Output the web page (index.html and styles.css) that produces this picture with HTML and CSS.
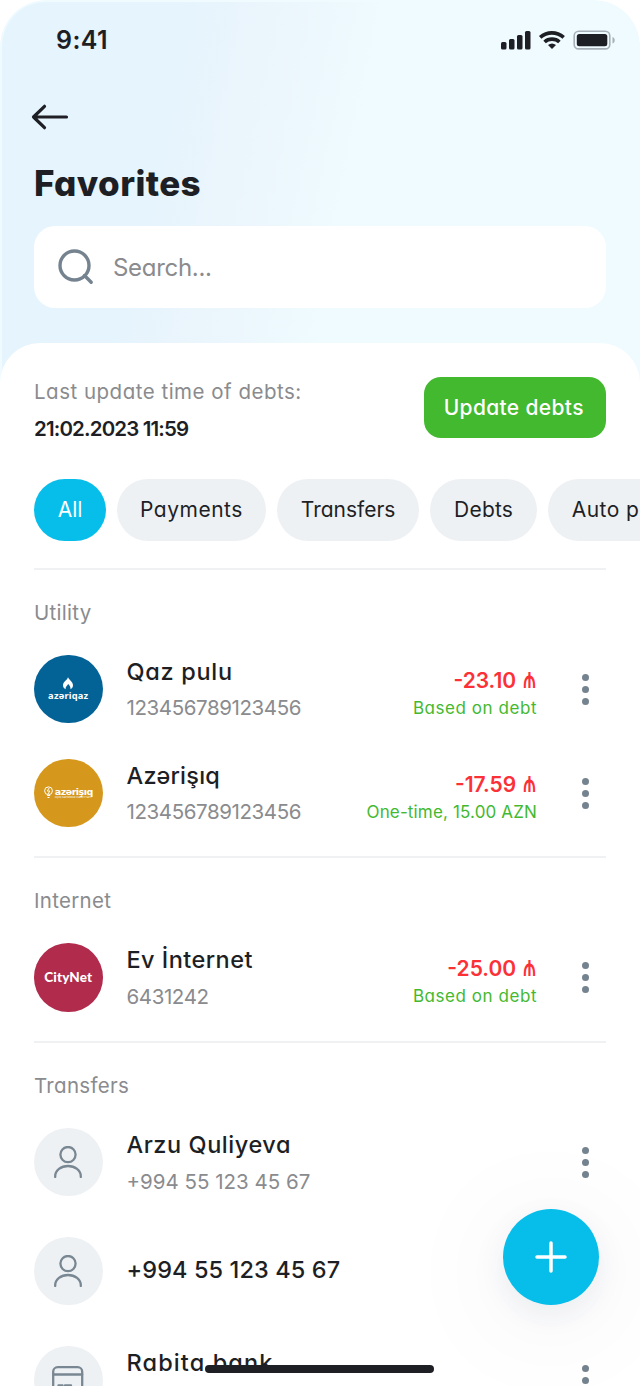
FILE: index.html
```html
<!DOCTYPE html>
<html lang="en">
<head>
<meta charset="utf-8">
<title>Favorites</title>
<link rel="stylesheet" href="styles.css">
</head>
<body>
<svg class="defs" width="0" height="0">
  <symbol id="user" viewBox="0 0 28 32"><circle cx="14" cy="8.6" r="7.6"/><path d="M1.2 31v-.8C1.2 24.500 7 20 14 20s12.800 4.500 12.800 10.200v.8"/></symbol>
  <symbol id="dots" viewBox="0 0 7 31"><circle cx="3.500" cy="3.500" r="3.500"/><circle cx="3.500" cy="15.500" r="3.500"/><circle cx="3.500" cy="27.500" r="3.500"/></symbol>
</svg>
<div class="phone">
  <header class="header">
    <div class="status">
      <span class="time">9:41</span>
      <svg class="indicators" width="116" height="20" viewBox="0 0 116 20">
        <g fill="#1e1f24"><rect x="1" y="12" width="5.500" height="7.500" rx="1.500"/><rect x="9" y="9" width="5.500" height="10.500" rx="1.500"/><rect x="17" y="5" width="5.500" height="14.500" rx="1.500"/><rect x="25" y="1" width="5.500" height="18.500" rx="1.500"/></g>
        <g fill="none" stroke="#1e1f24" stroke-width="3.700"><path d="M40.200 7.300C47.200 1.300 56.500 1.300 63.700 7.300"/><path d="M44.600 12C48.800 8.200 55.200 8.200 59.400 12"/></g>
        <path d="M48 15.100q4-3 8 0l-4 4z" fill="#1e1f24"/>
        <rect x="74.200" y="1.300" width="35.600" height="17.600" rx="4.500" fill="none" stroke="#a7b0b6" stroke-width="1.600"/>
        <rect x="76.800" y="3.900" width="30.500" height="12.400" rx="2.500" fill="#1e1f24"/>
        <path d="M112.500 7c3 1 3 5.500 0 6.500z" fill="#a7b0b6"/>
      </svg>
    </div>
    <svg class="back" width="38" height="26" viewBox="0 0 38 26"><path d="M13.500 2.300 2.500 13l11 10.700M2.500 13h33"/></svg>
    <h1 class="title">Favorites</h1>
    <div class="search">
      <svg class="search-icon" width="36" height="36" viewBox="0 0 36 36"><circle cx="16.500" cy="16.500" r="14.500"/><path d="m26.500 26.500 6.700 6.700"/></svg>
      <span class="placeholder">Search...</span>
    </div>
  </header>
  <main class="sheet">
    <div class="update">
      <div>
        <div class="update-label">Last update time of debts:</div>
        <div class="update-date">21:02.2023 11:59</div>
      </div>
      <button class="update-button">Update debts</button>
    </div>
    <nav class="chips">
      <span class="chip chip-all">All</span>
      <span class="chip chip-payments">Payments</span>
      <span class="chip chip-transfers">Transfers</span>
      <span class="chip chip-debts">Debts</span>
      <span class="chip chip-auto">Auto payments</span>
    </nav>
    <section class="section">
      <h2 class="section-title">Utility</h2>
      <div class="rows">
        <div class="row">
          <div class="avatar gas">
            <svg width="10" height="13" viewBox="0 0 10 13"><path d="M5 0c.5 2.500 5 4.500 5 8.300 0 1.900-1 3.200-2.500 4 .3-2-.7-3.400-2.300-5.300-1 1.800-3.200 3.200-2.500 5.300C1 11.500 0 10.200 0 8.300 0 4.500 4.800 3 5 0z" fill="#fff"/></svg>
            <span class="gas-name">azəriqaz</span>
          </div>
          <div class="info"><div class="name n-gas">Qaz pulu</div><div class="sub">123456789123456</div></div>
          <div class="amounts"><div class="amount">-23.10 <span class="manat">₼</span></div><div class="note">Based on debt</div></div>
          <svg class="dots" width="7" height="31"><use href="#dots"/></svg>
        </div>
        <div class="row">
          <div class="avatar light">
            <svg width="9" height="13" viewBox="0 0 9 13" fill="none" stroke="#fff"><circle cx="4.500" cy="4.800" r="3.900"/><path d="M5.200 2 3.200 5h2.600L4 8M3.200 9.500h3M3.500 11.500h2"/></svg>
            <span class="light-mark"><span class="light-name">azərişıq</span><span class="light-line">AÇIQ SƏHMDAR CƏMİYYƏTİ</span></span>
          </div>
          <div class="info"><div class="name n-light">Azərişıq</div><div class="sub">123456789123456</div></div>
          <div class="amounts"><div class="amount">-17.59 <span class="manat">₼</span></div><div class="note n-once">One-time, 15.00 AZN</div></div>
          <svg class="dots" width="7" height="31"><use href="#dots"/></svg>
        </div>
      </div>
    </section>
    <section class="section">
      <h2 class="section-title">Internet</h2>
      <div class="rows">
        <div class="row">
          <div class="avatar city">CityNet</div>
          <div class="info"><div class="name n-net">Ev İnternet</div><div class="sub">6431242</div></div>
          <div class="amounts"><div class="amount">-25.00 <span class="manat">₼</span></div><div class="note">Based on debt</div></div>
          <svg class="dots" width="7" height="31"><use href="#dots"/></svg>
        </div>
      </div>
    </section>
    <section class="section">
      <h2 class="section-title">Transfers</h2>
      <div class="rows rows-transfers">
        <div class="row">
          <div class="avatar"><svg class="user" width="28" height="32"><use href="#user"/></svg></div>
          <div class="info"><div class="name n-arzu">Arzu Quliyeva</div><div class="sub phone-sub">+994 55 123 45 67</div></div>
          <svg class="dots" width="7" height="31"><use href="#dots"/></svg>
        </div>
        <div class="row">
          <div class="avatar"><svg class="user" width="28" height="32"><use href="#user"/></svg></div>
          <div class="info single"><div class="name n-phone">+994 55 123 45 67</div></div>
        </div>
        <div class="row">
          <div class="avatar"><svg class="user" width="32" height="28" viewBox="0 0 32 28"><rect x="1.200" y="1.200" width="29" height="25.600" rx="4.500"/><path d="M1.200 8.500h29M6.500 19.500h4M13 19.500h6"/></svg></div>
          <div class="info"><div class="name n-bank">Rabita bank</div></div>
          <svg class="dots" width="7" height="31"><use href="#dots"/></svg>
        </div>
      </div>
    </section>
  </main>
  <button class="fab" aria-label="Add"><svg width="32" height="32" viewBox="0 0 32 32"><path d="M16 2v28M2 16h28"/></svg></button>
  <div class="home-bar"></div>
</div>
</body>
</html>
```
FILE: styles.css
```css
* { box-sizing: border-box; }
body { margin: 0; background: #fff; font-family: Inter, "Open Sans", sans-serif; font-feature-settings: "cv11"; color: #1e1f24; }
.defs { position: absolute; }
.phone { position: relative; width: 640px; height: 1386px; overflow: hidden; border-radius: 46px 46px 0 0; }
.header { height: 384px; padding: 0 34px; border: 2px solid #effbff; border-bottom: 0; border-radius: 46px 46px 0 0; background: linear-gradient(102deg, #e6f4fd 26%, #ebf5fc 37%, #effbff 54%); }
.status { display: flex; justify-content: space-between; align-items: center; height: 76px; padding: 0 0 0 20px; margin-right: -12px; }
.time { font-size: 25px; font-weight: 600; letter-spacing: .4px; }
.indicators { display: block; }
.back { display: block; margin: 26px 0 0 -5px; fill: none; stroke: #1e1f24; stroke-width: 3.200; stroke-linecap: round; stroke-linejoin: round; }
.title { margin: 28px 0 0 -2px; font-size: 35px; line-height: 50px; font-weight: 800; letter-spacing: .4px; }
.search { display: flex; align-items: center; height: 82px; margin: 18px -2px 0; padding-left: 24px; border-radius: 21px; background: #fff; }
.search-icon { fill: none; stroke: #74838f; stroke-width: 3.400; stroke-linecap: round; }
.placeholder { margin-left: 19px; font-size: 24px; color: #8a8b8e; letter-spacing: -.3px; }
.sheet { position: relative; height: 1100px; margin-top: -41px; padding: 34px 34px 0; border-radius: 40px 40px 0 0; background: #fff; }
.update { display: flex; justify-content: space-between; height: 61px; }
.update-label { margin-top: -3px; font-size: 20.500px; line-height: 36px; color: #8a8b8e; letter-spacing: .5px; white-space: nowrap; }
.update-date { font-size: 20.500px; line-height: 37px; font-weight: 600; letter-spacing: -.85px; white-space: nowrap; }
.update-button { width: 182.500px; height: 61px; padding: 0 2px 0 0; border: 0; border-radius: 17px; background: #43b930; color: #fff; font: 500 21px Inter, sans-serif; font-feature-settings: inherit; letter-spacing: .35px; }
.chips { display: flex; gap: 10.600px; height: 61.500px; margin: 41px -34px 0 0; overflow: hidden; }
.chip { flex: none; display: flex; align-items: center; justify-content: center; border-radius: 31px; background: #eef1f4; font-size: 21px; }
.chip-all { width: 72px; background: #07bdea; color: #fff; }
.chip-payments { width: 149.700px; letter-spacing: .5px; }
.chip-transfers { width: 142.500px; }
.chip-debts { width: 107.300px; letter-spacing: .2px; }
.chip-auto { padding: 0 24px; letter-spacing: .4px; }
.section { margin-top: 27px; padding-top: 25px; border-top: 2px solid #f0f1f3; }
.section + .section { margin-top: 29.200px; }
.section-title { margin: 0; font-size: 20.500px; line-height: 35px; font-weight: 400; color: #8a8b8e; letter-spacing: .3px; }
.rows { display: flex; flex-direction: column; gap: 36px; padding-top: 25.400px; }
.rows-transfers { gap: 41px; }
.row { display: flex; align-items: center; height: 68px; }
.avatar { flex: none; display: flex; align-items: center; justify-content: center; width: 68.500px; height: 68.500px; border-radius: 50%; background: #eef1f4; color: #fff; }
.gas { flex-direction: column; background: #036296; padding-top: 1px; }
.gas-name { font: 700 9.300px/11px "Noto Sans", sans-serif; font-feature-settings: normal; letter-spacing: .2px; }
.light { gap: 2px; background: #d5981d; }
.light-mark { display: flex; flex-direction: column; width: 38px; }
.light-name { font: 700 9.500px/9px "DejaVu Sans", sans-serif; letter-spacing: -.5px; white-space: nowrap; }
.light-line { font-size: 2.700px; line-height: 3px; white-space: nowrap; }
.city { background: #b02b4c; font: 900 13.500px Lato, sans-serif; letter-spacing: .1px; }
.user { fill: none; stroke: #788792; stroke-width: 2.300; stroke-linecap: round; }
.info { flex: 1; margin: 3px 0 0 24px; white-space: nowrap; }
.single { margin-top: -2px; }
.name { font-size: 23.500px; line-height: 36.500px; font-weight: 500; }
.n-gas { letter-spacing: .7px; }
.n-light { letter-spacing: .25px; }
.n-net { letter-spacing: .45px; }
.n-arzu { letter-spacing: .55px; }
.n-phone { letter-spacing: .1px; }
.n-bank { margin-bottom: 36.500px; letter-spacing: 1.100px; }
.sub { font-size: 20.500px; line-height: 36.500px; color: #8a8b8e; letter-spacing: -.4px; }
.phone-sub { letter-spacing: 0; }
.amounts { margin-right: 45px; padding-top: 8px; text-align: right; white-space: nowrap; }
.amount { font-size: 21px; line-height: 31px; font-weight: 600; color: #fc3137; }
.manat { display: inline-block; font-weight: 500; line-height: 1; transform: scale(.9, 1.350); transform-origin: 100% 79%; }
.note { font-size: 17px; line-height: 25px; color: #43b930; letter-spacing: .55px; }
.n-once { letter-spacing: .15px; }
.dots { flex: none; margin: 1px 17px 0 0; fill: #74838f; }
.fab { position: absolute; left: 503px; top: 1209px; display: flex; align-items: center; justify-content: center; width: 96px; height: 96px; padding: 0; border: 0; border-radius: 50%; background: #07bdea; box-shadow: 0 10px 28px rgba(40, 50, 80, .07), 0 15px 110px 20px rgba(40, 50, 80, .04); }
.fab svg { fill: none; stroke: #fff; stroke-width: 3.500; stroke-linecap: round; }
.home-bar { position: absolute; left: 205px; top: 1364.500px; width: 229px; height: 8.500px; border-radius: 5px; background: #1e1f24; }
```
